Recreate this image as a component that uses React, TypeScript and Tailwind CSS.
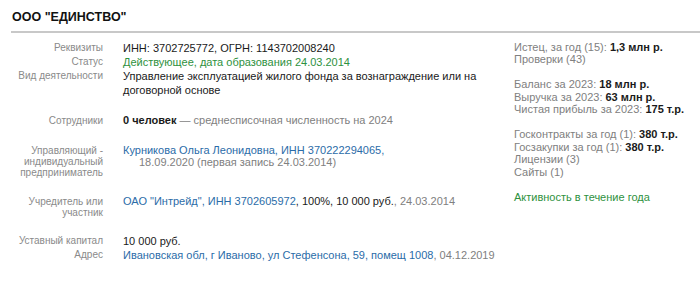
import React from 'react';

const Row = ({ label, children, className = '', labelPad = 'pt-[1.5px]' }: { label: React.ReactNode; children: React.ReactNode; className?: string; labelPad?: string }) => (
  <div className={`flex ${className}`}>
    <div className={`w-[92px] shrink-0 text-right text-[10px] leading-[11px] text-[#8a8a8a] ${labelPad}`}>{label}</div>
    <div className="ml-[20px] w-[375px] text-[11px] leading-[14px] text-[#1a1a1a]">{children}</div>
  </div>
);

const Stat = ({ label, value }: { label: string; value?: string }) => (
  <div>
    <span className="text-[#808080]">{label}</span>
    {value && <span className="font-bold text-[#1a1a1a]">{value}</span>}
  </div>
);

export default function App() {
  return (
    <div className="w-[700px] h-[286px] bg-white pl-[11px] pt-[10px] font-['Liberation_Sans',Arial,sans-serif]">
      <div className="pl-[1px] text-[12.5px] font-bold leading-[14px] text-[#111]">ООО "ЕДИНСТВО"</div>
      <div className="mt-[7px] h-[2px] bg-[#c8c8c8]" />

      <div className="flex mt-[7.5px]">
        <div className="flex flex-col">
          <Row label="Реквизиты">ИНН: 3702725772, ОГРН: 1143702008240</Row>
          <Row label="Статус">
            <span className="text-[#2e9140]">Действующее, дата образования 24.03.2014</span>
          </Row>
          <Row label="Вид деятельности">
            Управление эксплуатацией жилого фонда за вознаграждение или на договорной основе
          </Row>

          <Row label="Сотрудники" className="mt-[16.5px]">
            <span className="font-bold">0 человек</span>
            <span className="text-[#808080]"> — среднесписочная численность на 2024</span>
          </Row>

          <Row label={<>Управляющий -<br />индивидуальный<br />предприниматель</>} className="mt-[17px]" labelPad="pt-[0.5px]">
            <div className="leading-[12px]">
              <div className="text-[#2b6ca8]">Курникова Ольга Леонидовна, ИНН 370222294065,</div>
              <div className="pl-[16px] text-[#808080]">18.09.2020 (первая запись 24.03.2014)</div>
            </div>
          </Row>

          <Row label={<>Учредитель или<br />участник</>} className="mt-[16.5px]">
            <span className="text-[#2b6ca8]">ОАО "Интрейд", ИНН 3702605972</span>, 100%, 10 000 руб.
            <span className="text-[#808080]">, 24.03.2014</span>
          </Row>

          <Row label="Уставный капитал" className="mt-[16px]">10 000 руб.</Row>
          <Row label="Адрес">
            <span className="text-[#2b6ca8]">Ивановская обл, г Иваново, ул Стефенсона, 59, помещ 1008</span>
            <span className="text-[#808080]">, 04.12.2019</span>
          </Row>
        </div>

        <div className="ml-[16px] text-[11px] leading-[12.5px]">
          <div>
            <Stat label="Истец, за год (15): " value="1,3 млн р." />
            <Stat label="Проверки (43)" />
          </div>
          <div className="mt-[12.5px]">
            <Stat label="Баланс за 2023: " value="18 млн р." />
            <Stat label="Выручка за 2023: " value="63 млн р." />
            <Stat label="Чистая прибыль за 2023: " value="175 т.р." />
          </div>
          <div className="mt-[12.5px]">
            <Stat label="Госконтракты за год (1): " value="380 т.р." />
            <Stat label="Госзакупки за год (1): " value="380 т.р." />
            <Stat label="Лицензии (3)" />
            <Stat label="Сайты (1)" />
          </div>
          <div className="mt-[12.5px] text-[#2e9140]">Активность в течение года</div>
        </div>
      </div>
    </div>
  );
}
